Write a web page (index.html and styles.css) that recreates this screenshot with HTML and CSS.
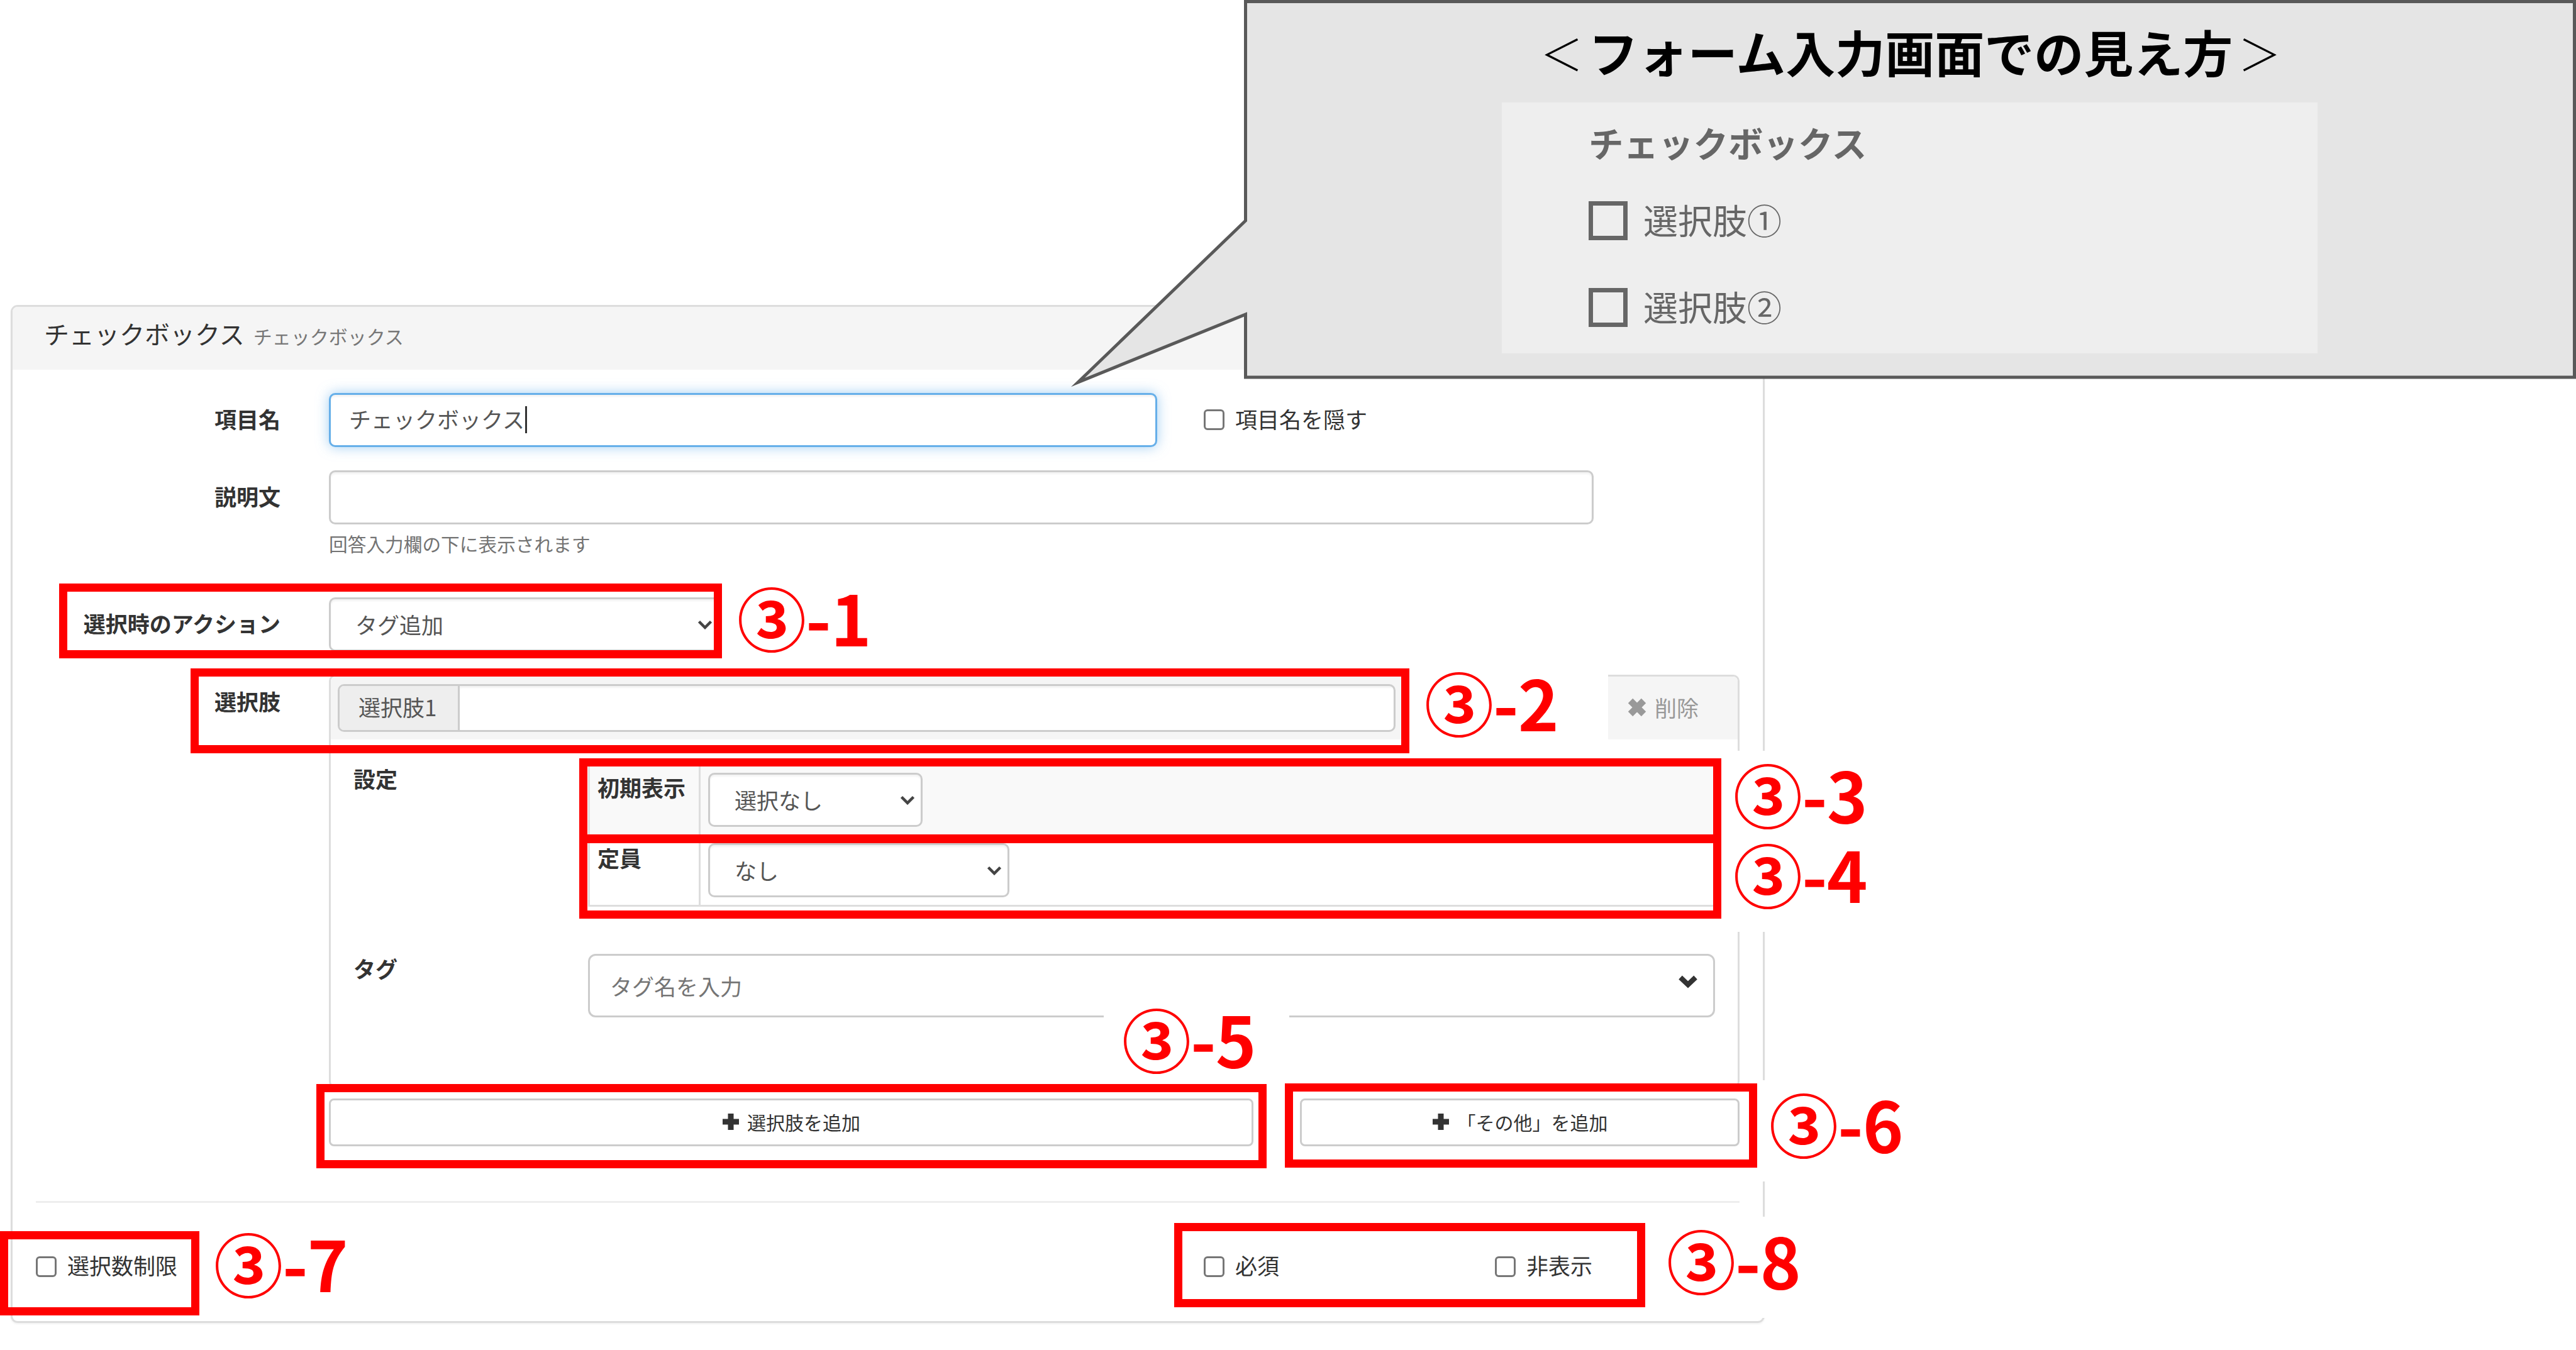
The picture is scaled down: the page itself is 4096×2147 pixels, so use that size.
FILE: index.html
```html
<!DOCTYPE html>
<html lang="ja">
<head>
    <meta charset="UTF-8">
    <meta name="viewport" content="width=device-width, initial-scale=1.0">
    <title>チェックボックス</title>
    <link rel="stylesheet" href="styles.css">
</head>
<body>

<div class="panel">
    <div class="panel-heading">チェックボックス <small>チェックボックス</small></div>
    <div class="panel-body">
        <div class="row">
            <div class="label">項目名</div>
            <div class="control name-input focus">チェックボックス<span class="caret"></span></div>
            <div class="check hide-name"><span class="box"></span>項目名を隠す</div>
        </div>
        <div class="row">
            <div class="label">説明文</div>
            <div>
                <div class="control desc-input"></div>
                <div class="help">回答入力欄の下に表示されます</div>
            </div>
        </div>
        <div class="row action-row">
            <div class="label">選択時のアクション</div>
            <div class="control select action-select">タグ追加
                <svg class="arrow" viewBox="0 0 24 15"><path d="M2.5 2.5L12 12L21.5 2.5"/></svg>
            </div>
        </div>
        <div class="row">
            <div class="label option-title">選択肢</div>
            <div>
                <div class="option">
                    <div class="option-heading">
                        <div class="input-group">
                            <div class="addon">選択肢1</div>
                            <div class="addon-input"></div>
                        </div>
                        <div class="delete">
                            <svg class="cross" viewBox="0 0 30 30"><path d="M4.5 4.5L25.5 25.5M25.5 4.5L4.5 25.5"/></svg>
                            削除
                        </div>
                    </div>
                    <div class="option-row">
                        <div class="option-label">設定</div>
                        <div class="table">
                            <div class="tr striped">
                                <div class="th">初期表示</div>
                                <div class="td">
                                    <div class="control select default-select">選択なし
                                        <svg class="arrow" viewBox="0 0 24 15"><path d="M2.5 2.5L12 12L21.5 2.5"/></svg>
                                    </div>
                                </div>
                            </div>
                            <div class="tr">
                                <div class="th">定員</div>
                                <div class="td">
                                    <div class="control select limit-select">なし
                                        <svg class="arrow" viewBox="0 0 24 15"><path d="M2.5 2.5L12 12L21.5 2.5"/></svg>
                                    </div>
                                </div>
                            </div>
                        </div>
                    </div>
                    <div class="option-row tag-row">
                        <div class="option-label">タグ</div>
                        <div class="tag-input">タグ名を入力
                            <svg class="chevron" viewBox="0 0 32 22"><path d="M4 4.5L16 16L28 4.5"/></svg>
                        </div>
                    </div>
                </div>
                <div class="buttons">
                    <div class="btn btn-option"><svg class="plus" viewBox="0 0 28 28"><path d="M14 1V27M1 14H27"/></svg>選択肢を追加</div>
                    <div class="btn btn-other"><svg class="plus" viewBox="0 0 28 28"><path d="M14 1V27M1 14H27"/></svg>「その他」を追加</div>
                </div>
            </div>
        </div>
        <div class="divider"></div>
        <div class="footer">
            <div class="check limit"><span class="box"></span>選択数制限</div>
            <div class="check required"><span class="box"></span>必須</div>
            <div class="check"><span class="box"></span>非表示</div>
        </div>
    </div>
</div>

<!-- numbered notes -->
<div class="note n1">③-1</div>
<div class="note n2">③-2</div>
<div class="note n3">③-3</div>
<div class="note n4">③-4</div>
<div class="note n5">③-5</div>
<div class="note n6">③-6</div>
<div class="note n7">③-7</div>
<div class="note n8">③-8</div>

<!-- red frames -->
<div class="frame f1"></div>
<div class="frame f2"></div>
<div class="frame f3"></div>
<div class="frame f4"></div>
<div class="frame f5"></div>
<div class="frame f6"></div>
<div class="frame f7"></div>
<div class="frame f8"></div>

<!-- speech balloon with the form preview -->
<div class="balloon">
    <svg class="balloon-shape" viewBox="0 0 2396 620">
        <path d="M280.5 2.5H2393.5V600H280.5V500L14 608L280.5 351Z"/>
    </svg>
    <div class="balloon-content">
        <div class="balloon-title"><span class="bracket">＜</span>フォーム入力画面での見え方<span class="bracket">＞</span></div>
        <div class="preview">
            <div class="preview-title">チェックボックス</div>
            <div class="preview-item"><span class="square"></span>選択肢①</div>
            <div class="preview-item"><span class="square"></span>選択肢②</div>
        </div>
    </div>
</div>

</body>
</html>
```
FILE: styles.css
```css
* {
    box-sizing: border-box;
}

body {
    position: relative;
    width: 4096px;
    height: 2147px;
    margin: 0;
    overflow: hidden;
    background-color: white;
    font-family: "Noto Sans CJK JP", sans-serif;
    font-size: 35px;
    line-height: 46px;
    color: #333;
    white-space: nowrap;
}

.panel {
    display: flow-root;
    width: 2789px;
    height: 1619px;
    margin: 485px 0 0 17px;
    border: 3px solid #ddd;
    border-radius: 11px;
    box-shadow: 0 2px 3px rgba(0, 0, 0, 0.05);
}

.panel-heading {
    height: 100px;
    padding-left: 50px;
    background-color: #f5f5f5;
    border-radius: 8px 8px 0 0;
    font-size: 40px;
    line-height: 84px;
}

.panel-heading small {
    margin-left: 5px;
    font-size: 30px;
    color: #777;
}

.panel-body {
    padding-top: 37px;
}

.row {
    display: flex;
    align-items: flex-start;
    margin-bottom: 37px;
}

.label {
    width: 426px;
    margin-right: 77px;
    font-weight: bold;
    line-height: 81px;
    text-align: right;
}

.option-title {
    line-height: 84px;
}

.control {
    height: 86px;
    padding-left: 29px;
    border: 3px solid #ccc;
    border-radius: 10px;
    background-color: white;
    box-shadow: inset 0 3px 3px rgba(0, 0, 0, 0.05);
    line-height: 75px;
    color: #555;
}

.focus {
    border-color: #66afe9;
    box-shadow: inset 0 3px 3px rgba(0, 0, 0, 0.05), 0 0 20px rgba(102, 175, 233, 0.6);
}

.name-input {
    width: 1317px;
}

.caret {
    display: inline-block;
    width: 3px;
    height: 43px;
    margin-left: 1px;
    background-color: #333;
    vertical-align: -8px;
}

.check {
    display: flex;
    align-items: center;
}

.box {
    width: 33px;
    height: 33px;
    margin: 4px 17px 0 0;
    border: 3px solid #767676;
    border-radius: 6px;
    background-color: white;
}

.hide-name {
    height: 81px;
    margin-left: 74px;
}

.desc-input {
    width: 2011px;
}

.help {
    margin-top: 6px;
    margin-bottom: 2px;
    font-size: 29.7px;
    line-height: 50px;
    color: #737373;
}

.action-row {
    margin-top: 58px;
    margin-bottom: 37px;
}

.select {
    display: flex;
    justify-content: space-between;
    align-items: center;
    padding: 0 9px 0 39px;
    line-height: 80px;
}

.arrow {
    width: 24px;
    height: 15px;
    fill: none;
    stroke: #444;
    stroke-width: 4.5;
}

.action-select {
    width: 622px;
}

.option {
    width: 2243px;
    height: 657px;
    border: 3px solid #ddd;
    border-radius: 10px;
}

.option-heading {
    display: flex;
    align-items: center;
    height: 100px;
    padding-left: 11px;
    background-color: #f5f5f5;
    border-radius: 8px 8px 0 0;
}

.input-group {
    display: flex;
    width: 1682px;
    height: 76px;
    border: 3px solid #ccc;
    border-radius: 10px;
    background-color: white;
    overflow: hidden;
}

.addon {
    width: 191px;
    padding-left: 30px;
    border-right: 3px solid #ccc;
    background-color: #eee;
    line-height: 66px;
    color: #555;
}

.addon-input {
    flex: 1;
    box-shadow: inset 0 3px 3px rgba(0, 0, 0, 0.05);
}

.delete {
    display: flex;
    align-items: center;
    gap: 13px;
    margin-left: 369px;
    padding-bottom: 3px;
    line-height: 68px;
    color: #999;
}

.cross {
    width: 30px;
    height: 30px;
    fill: none;
    stroke: #999;
    stroke-width: 10.5;
}

.option-row {
    display: flex;
    padding: 39px 0 0 36px;
}

.option-label {
    width: 373px;
    font-weight: bold;
}

.table {
    width: 1794px;
    border: 3px solid #ddd;
}

.tr {
    display: flex;
    height: 109px;
}

.striped {
    height: 112px;
    border-bottom: 3px solid #ddd;
    background-color: #f9f9f9;
}

.th {
    width: 176px;
    padding: 11px 0 0 12px;
    border-right: 3px solid #ddd;
    font-weight: bold;
}

.td {
    padding: 11px 12px;
}

.default-select {
    width: 341px;
}

.limit-select {
    width: 479px;
}

.tag-row {
    padding-top: 75px;
}

.tag-input {
    display: flex;
    justify-content: space-between;
    align-items: center;
    width: 1792px;
    height: 101px;
    padding: 0 24px 0 32px;
    border: 3px solid #ccc;
    border-radius: 12px;
    color: #757575;
    line-height: 90px;
}

.chevron {
    width: 32px;
    height: 22px;
    margin-bottom: 14px;
    fill: none;
    stroke: #333;
    stroke-width: 8;
}

.buttons {
    display: flex;
    gap: 74px;
    margin-top: 17px;
}

.btn {
    display: flex;
    justify-content: center;
    align-items: center;
    gap: 12px;
    height: 76px;
    padding-bottom: 3px;
    border: 3px solid #ccc;
    border-radius: 8px;
    font-size: 30px;
    line-height: 66px;
}

.btn-option {
    width: 1470px;
}

.btn-other {
    width: 699px;
}

.plus {
    width: 28px;
    height: 28px;
    fill: none;
    stroke: #333;
    stroke-width: 9;
}

.divider {
    width: 2709px;
    height: 3px;
    margin: 87px 0 76px 37px;
    background-color: #eee;
}

.footer {
    display: flex;
    margin-left: 37px;
}

.limit {
    width: 1857px;
}

.required {
    width: 463px;
}

/* numbered notes, white background hides what is below */
.note {
    position: absolute;
    width: 295px;
    height: 161px;
    padding-left: 29px;
    background-color: white;
    color: red;
    font-size: 110px;
    font-weight: bold;
    letter-spacing: -1px;
    line-height: 134px;
}

.n1 { left: 1143px; top: 913px; }
.n2 { left: 2236px; top: 1048px; width: 321px; }
.n3 { left: 2727px; top: 1194px; }
.n4 { left: 2727px; top: 1321px; }
.n5 { left: 1755px; top: 1583px; }
.n6 { left: 2784px; top: 1718px; }
.n7 { left: 311px; top: 1940px; }
.n8 { left: 2621px; top: 1935px; }

.frame {
    position: absolute;
    border: 13px solid red;
}

.f1 { left: 94px; top: 928px; width: 1054px; height: 119px; }
.f2 { left: 303px; top: 1063px; width: 1938px; height: 135px; }
.f3 { left: 921px; top: 1206px; width: 1816px; height: 135px; }
.f4 { left: 921px; top: 1327px; width: 1816px; height: 134px; }
.f5 { left: 503px; top: 1724px; width: 1511px; height: 134px; }
.f6 { left: 2043px; top: 1723px; width: 751px; height: 134px; }
.f7 { left: 0; top: 1958px; width: 317px; height: 134px; }
.f8 { left: 1867px; top: 1945px; width: 749px; height: 134px; }

.balloon {
    position: absolute;
    left: 1700px;
    top: 0;
    width: 2396px;
    height: 620px;
}

.balloon-shape {
    position: absolute;
    width: 2396px;
    height: 620px;
    fill: #e5e5e5;
    stroke: #595959;
    stroke-width: 5;
    stroke-miterlimit: 10;
}

.balloon-content {
    position: relative;
    margin-left: 280px;
}

.balloon-title {
    height: 163px;
    padding-top: 20px;
    font-size: 79px;
    font-weight: bold;
    line-height: 124px;
    text-align: center;
    color: black;
}

.bracket {
    display: inline-block;
    width: 85px;
    font-size: 68px;
    font-weight: 300;
    line-height: 100px;
    vertical-align: 3px;
}

.preview {
    width: 1297px;
    height: 399px;
    margin-left: 408px;
    padding: 28px 0 0 138px;
    background-color: #eee;
    color: #666;
    font-size: 55px;
    line-height: 70px;
}

.preview-title {
    font-size: 55.5px;
    font-weight: bold;
}

.preview-item {
    display: flex;
    align-items: center;
    height: 62px;
    margin-top: 59px;
    line-height: 62px;
    padding-bottom: 6px;
}

.preview-item + .preview-item {
    margin-top: 76px;
}

.square {
    width: 62px;
    height: 62px;
    margin: 6px 25px 0 0;
    border: 7px solid #666;
}
```
